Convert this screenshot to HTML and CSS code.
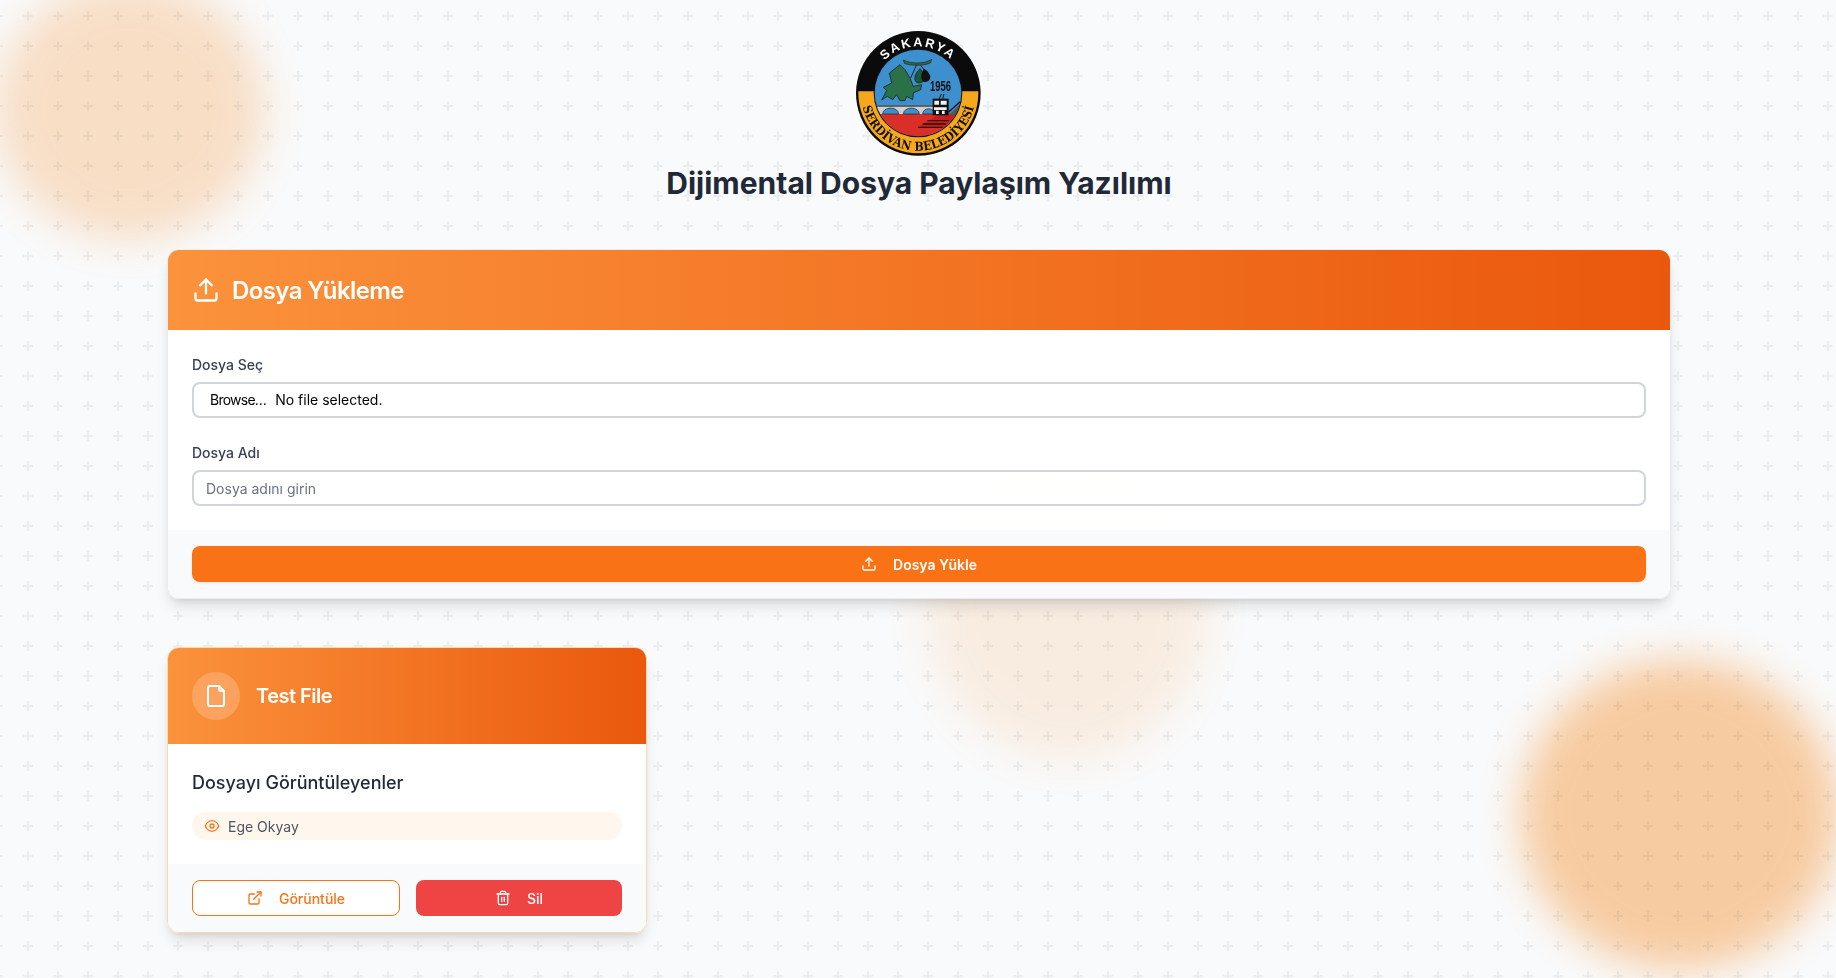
FILE: index.html
```html
<!DOCTYPE html>
<html lang="tr">
<head>
<meta charset="utf-8">
<title>Dijimental Dosya Paylaşım Yazılımı</title>
<link rel="stylesheet" href="styles.css">
</head>
<body>
<div class="backdrop">
  <div class="blob blob-a"></div>
  <div class="blob blob-b"></div>
  <div class="blob blob-c"></div>
  <svg class="pattern" width="100%" height="100%">
    <defs>
      <pattern id="plus" x="13" y="1" width="30" height="30" patternUnits="userSpaceOnUse">
        <path d="M14 10h2v4h4v2h-4v4h-2v-4h-4v-2h4z" fill="#000" fill-opacity=".05"/>
      </pattern>
    </defs>
    <rect width="100%" height="100%" fill="url(#plus)"/>
  </svg>
</div>

<main class="page">
  <header class="masthead">
    <svg class="logo" viewBox="3 0 408 396" width="136" height="132" role="img" aria-label="Serdivan Belediyesi">
      <defs>
        <clipPath id="band"><rect x="0" y="190" width="408" height="206"/></clipPath>
        <clipPath id="inner"><circle cx="204" cy="195" r="130"/></clipPath>
        <path id="arcTop" d="M63 196A141 141 0 0 1 345 196"/>
        <path id="arcBottom" d="M33 196A172 172 0 0 0 377 196"/>
      </defs>
      <circle cx="205" cy="196" r="187" fill="#0b0b0b"/>
      <circle cx="205" cy="196" r="180" fill="#f5a81c" clip-path="url(#band)"/>
      <circle cx="204" cy="195" r="133" fill="#111"/>
      <g clip-path="url(#inner)">
        <rect x="70" y="60" width="270" height="270" fill="#3e8fcd"/>
        <rect x="70" y="256" width="270" height="80" fill="#d92f28"/>
        <rect x="70" y="232" width="185" height="26" fill="#cfcfcf"/>
        <rect x="70" y="232" width="185" height="4" fill="#333"/>
        <path d="M98 258a24 18 0 0 1 48 0zM160 258a24 18 0 0 1 48 0zM218 258a18 16 0 0 1 36 0z" fill="#3e8fcd" stroke="#222" stroke-width="2"/>
        <path d="M262 262 200 300H282L318 262z" fill="#c0211d"/>
        <path d="M232 278H296M218 288H288M204 298H278" stroke="#3a0c0a" stroke-width="4"/>
        <path d="M296 262 336 222V262z" fill="#555"/>
        <path d="M296 252 332 220" stroke="#111" stroke-width="4"/>
      </g>
      <path d="M95 216 110 188 100 178 125 165 118 135 150 110 165 125 180 150 190 175 215 170 212 185 190 195 188 215 170 205 165 218 150 218 140 200 128 215 112 205Z" fill="#2a7049" stroke="#111" stroke-width="2"/>
      <path d="M160 96C180 108 225 108 245 94L242 104C225 114 180 114 163 106Z" fill="#2e6b47" stroke="#222" stroke-width="2"/>
      <path d="M200 110 182 150M212 112 226 130" stroke="#222" stroke-width="3" fill="none"/>
      <path d="M210 122C196 136 190 150 198 162 206 168 216 164 222 158 224 144 218 130 210 122Z" fill="#1c5b3a" stroke="#111" stroke-width="2"/>
      <path d="M222 122C210 140 212 156 222 162 236 164 244 152 240 142 236 132 230 126 222 122Z" fill="#111"/>
      <text class="logo-year" x="240" y="188" textLength="63" lengthAdjust="spacingAndGlyphs">1956</text>
      <rect x="248" y="212" width="48" height="50" fill="#111"/>
      <path d="M253 218h14v12h-14zM272 218h18v12h-18zM252 238h38v8h-38zM258 248h8v10h-8zM276 248h8v10h-8z" fill="#f1f1f1"/>
      <path d="M268 212 274 198M278 212 282 198" stroke="#111" stroke-width="3"/>
      <text class="logo-top"><textPath href="#arcTop" startOffset="50%" text-anchor="middle">SAKARYA</textPath></text>
      <text class="logo-bottom"><textPath href="#arcBottom" startOffset="50%" text-anchor="middle">SERDİVAN BELEDİYESİ</textPath></text>
    </svg>
    <h1 class="page-title">Dijimental Dosya Paylaşım Yazılımı</h1>
  </header>

  <section class="card upload-card">
    <div class="gradient-head upload-head">
      <svg class="icon icon-28" viewBox="0 0 24 24"><path d="M21 15v4a2 2 0 0 1-2 2H5a2 2 0 0 1-2-2v-4"/><path d="M17 8l-5-5-5 5"/><path d="M12 3v12"/></svg>
      <h2 class="upload-title">Dosya Yükleme</h2>
    </div>
    <div class="upload-body">
      <div class="field">
        <label class="field-label">Dosya Seç</label>
        <div class="file-input"><span class="file-button">Browse…</span><span>No file selected.</span></div>
      </div>
      <div class="field">
        <label class="field-label" for="name">Dosya Adı</label>
        <input class="text-input" id="name" type="text" placeholder="Dosya adını girin">
      </div>
    </div>
    <div class="card-foot">
      <button class="btn btn-primary btn-full">
        <svg class="icon icon-16" viewBox="0 0 24 24"><path d="M21 15v4a2 2 0 0 1-2 2H5a2 2 0 0 1-2-2v-4"/><path d="M17 8l-5-5-5 5"/><path d="M12 3v12"/></svg>
        <span>Dosya Yükle</span>
      </button>
    </div>
  </section>

  <section class="file-grid">
    <article class="card file-card">
      <div class="gradient-head file-head">
        <span class="file-badge">
          <svg class="icon icon-24" viewBox="0 0 24 24"><path d="M15 2H6a2 2 0 0 0-2 2v16a2 2 0 0 0 2 2h12a2 2 0 0 0 2-2V7z"/><path d="M15 2v3a2 2 0 0 0 2 2h3"/></svg>
        </span>
        <h3 class="file-title">Test File</h3>
      </div>
      <div class="file-body">
        <h4 class="viewers-title">Dosyayı Görüntüleyenler</h4>
        <div class="viewer-chip">
          <svg class="icon icon-16 chip-icon" viewBox="0 0 24 24"><path d="M2 12s3-8 10-8 10 8 10 8-3 8-10 8-10-8-10-8z"/><circle cx="12" cy="12" r="3"/></svg>
          <span>Ege Okyay</span>
        </div>
      </div>
      <div class="card-foot file-actions">
        <button class="btn btn-outline">
          <svg class="icon icon-16" viewBox="0 0 24 24"><path d="M18 13v6a2 2 0 0 1-2 2H5a2 2 0 0 1-2-2V8a2 2 0 0 1 2-2h6"/><path d="M15 3h6v6"/><path d="M10 14 21 3"/></svg>
          <span>Görüntüle</span>
        </button>
        <button class="btn btn-danger">
          <svg class="icon icon-16" viewBox="0 0 24 24"><path d="M3 6h18"/><path d="M19 6v14c0 1-1 2-2 2H7c-1 0-2-1-2-2V6"/><path d="M8 6V4c0-1 1-2 2-2h4c1 0 2 1 2 2v2"/><path d="M10 11v6"/><path d="M14 11v6"/></svg>
          <span>Sil</span>
        </button>
      </div>
    </article>
  </section>
</main>
</body>
</html>
```
FILE: styles.css
```css
* { box-sizing: border-box; }

html, body { margin: 0; height: 100%; }

body {
  position: relative;
  overflow: hidden;
  background: #f9fafb;
  color: #1f2937;
  font-family: Inter, "Liberation Sans", sans-serif;
  font-size: 14px;
}

.backdrop {
  position: absolute;
  inset: 0;
  overflow: hidden;
}

.pattern { position: absolute; inset: 0; }

.blob {
  position: absolute;
  border-radius: 50%;
  background: #f59030;
  filter: blur(20px);
}

.blob-a { left: -5px; top: -20px; width: 270px; height: 260px; opacity: .26; }
.blob-b { left: 925px; top: 450px; width: 285px; height: 310px; opacity: .12; }
.blob-c { left: 1520px; top: 660px; width: 320px; height: 310px; opacity: .44; }

.page {
  position: relative;
  width: 1504px;
  margin-left: 167px;
  padding-top: 28px;
}

.masthead {
  display: flex;
  flex-direction: column;
  align-items: center;
  margin-bottom: 48px;
}

.logo { display: block; margin-bottom: 5px; filter: blur(.35px); }
.logo-top { font: 700 38px "Liberation Sans", sans-serif; fill: #fff; letter-spacing: 6px; }
.logo-bottom { font: 700 37px "DejaVu Serif Condensed", "DejaVu Serif", serif; fill: #111; letter-spacing: .5px; }
.logo-year { font: 700 44px "Liberation Sans", sans-serif; fill: #111; }

.page-title {
  margin: 0;
  color: #1f2937;
  font-size: 30px;
  font-weight: 700;
  line-height: 36px;
}

.card {
  overflow: hidden;
  border: 1px solid rgba(229, 231, 235, .8);
  border-radius: 12px;
  background: rgba(255, 255, 255, .96);
  backdrop-filter: blur(12px);
  box-shadow: 0 10px 15px -3px rgba(0, 0, 0, .12), 0 4px 6px -2px rgba(0, 0, 0, .07);
}

.gradient-head {
  display: flex;
  align-items: center;
  color: #fff;
  background: linear-gradient(90deg, #fb923c, #ea580c);
}

.upload-head { gap: 12px; height: 80px; padding: 0 24px; }

.upload-title {
  margin: 0;
  padding-top: 2px;
  font-size: 24px;
  font-weight: 600;
  line-height: 32px;
  letter-spacing: -.6px;
}

.icon {
  flex: none;
  fill: none;
  stroke: currentColor;
  stroke-width: 2;
  stroke-linecap: round;
  stroke-linejoin: round;
}

.icon-16 { width: 16px; height: 16px; }
.icon-24 { width: 24px; height: 24px; }
.icon-28 { width: 28px; height: 28px; }

.upload-body {
  display: flex;
  flex-direction: column;
  gap: 24px;
  padding: 24px;
}

.field-label {
  display: block;
  margin-bottom: 7px;
  padding-top: 1px;
  color: #374151;
  font-weight: 500;
  line-height: 20px;
}

.file-input, .text-input {
  display: flex;
  align-items: center;
  width: 100%;
  height: 36px;
  border: 2px solid #d1d5db;
  border-radius: 8px;
  background: transparent;
  font: inherit;
}

.file-input { padding: 0 16px 2px; color: #000; }
.file-button { margin-right: 9px; letter-spacing: -.75px; }
.text-input { padding: 0 12px; color: #1f2937; outline: none; }
.text-input::placeholder { color: #6b7280; opacity: 1; }

.card-foot { padding: 16px 24px; background: #f9fafb; }

.btn {
  display: flex;
  align-items: center;
  justify-content: center;
  gap: 16px;
  height: 36px;
  padding: 0;
  border: 0;
  border-radius: 8px;
  font: inherit;
  font-weight: 600;
}

.btn-full { width: 100%; }

.btn-primary {
  color: #fff;
  background: #f97316;
  box-shadow: 0 1px 3px rgba(0, 0, 0, .1);
}

.file-grid {
  display: grid;
  grid-template-columns: repeat(3, 1fr);
  gap: 32px;
  margin-top: 48px;
}

.file-card { border-color: #fed7aa; }

.file-head { gap: 16px; height: 96px; padding: 0 24px; }

.file-badge {
  display: flex;
  align-items: center;
  justify-content: center;
  width: 48px;
  height: 48px;
  border-radius: 50%;
  background: rgba(255, 255, 255, .2);
}

.file-title {
  margin: 0;
  font-size: 20px;
  font-weight: 600;
  line-height: 28px;
  letter-spacing: -.5px;
}

.file-body { padding: 24px; }

.viewers-title {
  margin: 0 0 15px;
  padding-top: 1px;
  color: #1f2937;
  font-size: 18px;
  font-weight: 500;
  line-height: 28px;
}

.viewer-chip {
  display: flex;
  align-items: center;
  gap: 8px;
  height: 28px;
  padding: 0 12px;
  border-radius: 14px;
  background: #fff7ed;
  color: #4b5563;
}

.chip-icon { color: #f97316; }

.file-actions { display: flex; gap: 16px; }

.btn-outline {
  flex: 207 1 0;
  border: 1px solid #f97316;
  background: #fff;
  color: #f97316;
  font-weight: 500;
}

.btn-danger {
  flex: 207 1 0;
  background: #ef4444;
  color: #fff;
  font-weight: 500;
}
```
